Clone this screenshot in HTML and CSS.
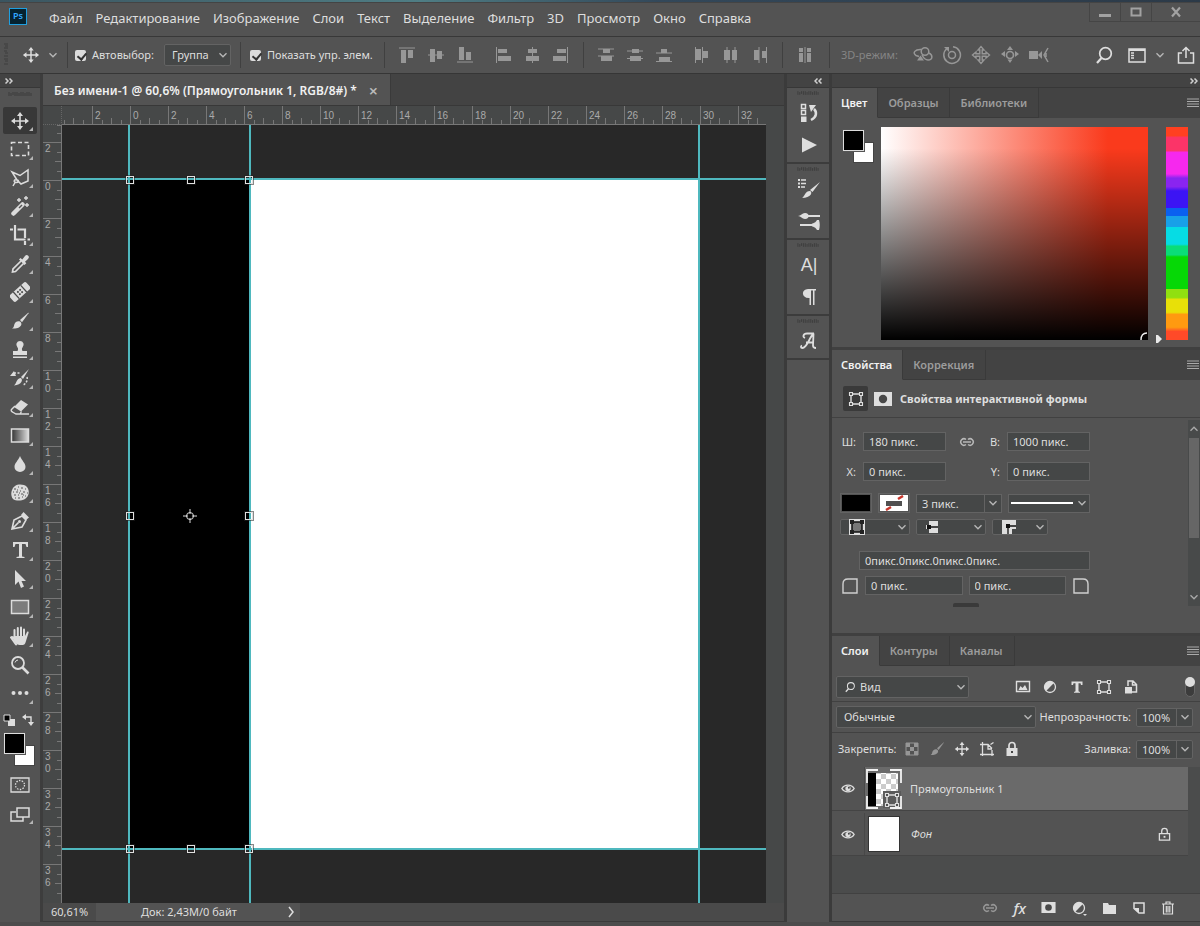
FILE: index.html
```html
<!DOCTYPE html>
<html lang="ru">
<head>
<meta charset="utf-8">
<title>Без имени-1</title>
<link rel="stylesheet" href="styles.css">
</head>
<body>
<svg class="defs" aria-hidden="true">
  <symbol id="chev" viewBox="0 0 10 10"><path d="M1.5 3.2 5 6.8 8.5 3.2" fill="none" stroke="currentColor" stroke-width="1.3"/></symbol>
  <symbol id="move" viewBox="0 0 20 20"><path d="M10 3v14M3 10h14" stroke="currentColor" stroke-width="1.6"/><path d="M10 1 13 5H7zM10 19 7 15h6zM1 10 5 7v6zM19 10l-4 3V7z" fill="currentColor"/></symbol>
  <symbol id="menu" viewBox="0 0 12 10"><path d="M0 1h12M0 3.5h12M0 6h12M0 8.5h12" stroke="currentColor" stroke-width="1.2"/></symbol>
  <symbol id="frame" viewBox="0 0 16 16"><path d="M3 3h10v10H3z" fill="none" stroke="currentColor" stroke-width="1.4"/><path d="M1.5 1.5h3v3h-3zM11.500 1.500h3v3h-3zM1.500 11.500h3v3h-3zM11.500 11.500h3v3h-3z" fill="#484848" stroke="currentColor" stroke-width="1.1"/></symbol>
  <symbol id="eye" viewBox="0 0 16 12"><path d="M1 6C4 .8 12 .8 15 6 12 11.200 4 11.200 1 6z" fill="none" stroke="currentColor" stroke-width="1.6"/><circle cx="8" cy="6" r="3" fill="currentColor"/><circle cx="9" cy="5.200" r="1.100" fill="#444"/></symbol>
  <symbol id="link" viewBox="0 0 18 10"><path d="M8 2.500A3.200 3.200 0 1 0 8 7.500M10 2.500a3.200 3.200 0 1 1 0 5M5 5h8" fill="none" stroke="currentColor" stroke-width="1.500"/></symbol>
  <symbol id="half" viewBox="0 0 16 16"><circle cx="8" cy="8" r="5.500" fill="none" stroke="currentColor" stroke-width="1.300"/><path d="M4.100 11.900A5.500 5.500 0 0 1 11.900 4.100z" fill="currentColor"/></symbol>
  <symbol id="mask" viewBox="0 0 18 14"><path d="M0 0h18v14H0z" fill="currentColor"/><circle cx="9" cy="7" r="4.200" fill="#484848"/></symbol>
  <symbol id="lens" viewBox="0 0 20 20"><circle cx="11.500" cy="8.500" r="5.800" fill="none" stroke="currentColor" stroke-width="1.700"/><path d="M7.500 13 3 18" stroke="currentColor" stroke-width="2.200"/></symbol>
  <symbol id="brush" viewBox="0 0 20 20"><path d="M18.500 1.500 10 9l2 2.200 6.500-9z" fill="currentColor"/><path d="M9 10.200c1.600.3 2.500 1.400 2.400 3C11 16 7 18 2 17.500c2-1 1.800-2.600 2.400-4.300.7-2 2.500-3.300 4.600-3z" fill="currentColor"/></symbol>
  <symbol id="grip" viewBox="0 0 24 4"><path d="M1 0v4M3 1v3M5 0v3M7 0v4M9 0v4M11 1v3M13 0v4M15 0v4M17 1v3M19 0v4M21 0v4M23 1v3" stroke="#3c3c3c" stroke-width="1"/></symbol>
  <symbol id="dbl" viewBox="0 0 8 6"><path d="M.5.500 3 3 .500 5.500M4.500.500 7 3 4.500 5.500" fill="none" stroke="currentColor" stroke-width="1.500"/></symbol>
  <symbol id="lock" viewBox="0 0 14 16"><path d="M1.500 7h11v7h-11zM4 7V4.500a3 3 0 0 1 6 0V7" fill="none" stroke="currentColor" stroke-width="1.400"/><path d="M6 9.500h2v2H6z" fill="currentColor"/></symbol>
</svg>

<div class="app">
  <div class="skyline"></div>

  <header class="menubar">
    <div class="logo">Ps</div>
    <nav class="menus">
      <button>Файл</button><button>Редактирование</button><button>Изображение</button><button>Слои</button><button>Текст</button><button>Выделение</button><button>Фильтр</button><button>3D</button><button>Просмотр</button><button>Окно</button><button>Справка</button>
    </nav>
    <div class="winbtns">
      <button aria-label="Свернуть"><svg width="14" height="12"><path d="M1 8h12v3H1z" fill="currentColor"/></svg></button>
      <button aria-label="Развернуть"><svg width="14" height="12"><path d="M2.500 2.500h9v7h-9z" fill="none" stroke="currentColor" stroke-width="2"/></svg></button>
      <button aria-label="Закрыть" class="wide"><svg width="12" height="12"><path d="M2 1.500 10 10.500M10 1.500 2 10.500" stroke="currentColor" stroke-width="2.200"/></svg></button>
    </div>
  </header>

  <div class="options">
    <div class="osec first">
      <svg class="vgrip" width="4" height="24"><path d="M0 1h4M1 3h3M0 5h4M0 8h3M1 10h3M0 13h4M0 16h4M1 18h3M0 21h4" stroke="#3e3e3e"/></svg>
      <svg width="18" height="18"><use href="#move"/></svg>
      <svg width="10" height="10"><use href="#chev"/></svg>
    </div>
    <div class="osec auto">
      <label class="check"><input type="checkbox" checked>Автовыбор:</label>
      <span class="pick small"><select aria-label="Автовыбор"><option>Группа</option></select><svg width="10" height="10"><use href="#chev"/></svg></span>
    </div>
    <div class="osec show"><label class="check"><input type="checkbox" checked>Показать упр. элем.</label></div>
    <div class="osec icons dim">
      <div class="trio">
        <svg viewBox="0 0 20 20"><path d="M2 3h16" stroke="currentColor"/><path d="M4 5h5v13H4zM11 5h5v8h-5z" fill="currentColor"/></svg>
        <svg viewBox="0 0 20 20"><path d="M2 10h16" stroke="currentColor"/><path d="M4 4h5v13H4zM11 6h5v8h-5z" fill="currentColor"/></svg>
        <svg viewBox="0 0 20 20"><path d="M2 17h16" stroke="currentColor"/><path d="M4 2h5v13H4zM11 7h5v8h-5z" fill="currentColor"/></svg>
      </div>
      <div class="trio">
        <svg viewBox="0 0 20 20"><path d="M3.500 2v16" stroke="currentColor"/><path d="M5 4h9v4H5zM5 11h13v5H5z" fill="currentColor"/></svg>
        <svg viewBox="0 0 20 20"><path d="M10.500 2v16" stroke="currentColor"/><path d="M6 4h9v4H6zM4 11h13v5H4z" fill="currentColor"/></svg>
        <svg viewBox="0 0 20 20"><path d="M16.500 2v16" stroke="currentColor"/><path d="M6 4h9v4H6zM2 11h13v5H2z" fill="currentColor"/></svg>
      </div>
    </div>
    <div class="osec icons dim">
      <div class="trio">
        <svg viewBox="0 0 20 20"><path d="M2 4h16M2 11h16" stroke="currentColor"/><path d="M7 4h7v4H7zM5 11h11v5H5z" fill="currentColor"/></svg>
        <svg viewBox="0 0 20 20"><path d="M2 6h16M2 13.500h16" stroke="currentColor"/><path d="M7 4h7v4H7zM5 11h11v5H5z" fill="currentColor"/></svg>
        <svg viewBox="0 0 20 20"><path d="M2 8h16M2 16.500h16" stroke="currentColor"/><path d="M7 4h6v4H7zM5 12h11v5H5z" fill="currentColor"/></svg>
      </div>
      <div class="trio">
        <svg viewBox="0 0 20 20"><path d="M3.500 2v16M10.500 2v16" stroke="currentColor"/><path d="M4 4h5v11H4zM11 6h5v7h-5z" fill="currentColor"/></svg>
        <svg viewBox="0 0 20 20"><path d="M6 2v16M14 2v16" stroke="currentColor"/><path d="M3 5h6v10H3zM11 5h5v10h-5z" fill="currentColor"/></svg>
        <svg viewBox="0 0 20 20"><path d="M9 2v16M16.500 2v16" stroke="currentColor"/><path d="M4 5h5v10H4zM12 6h4v7h-4z" fill="currentColor"/></svg>
      </div>
    </div>
    <div class="osec icons dim single">
      <svg viewBox="0 0 20 20"><path d="M10 2v16" stroke="currentColor"/><path d="M4 3h4v4H4zM4 8h4v9H4zM12 3h4v4h-4zM12 8h4v9h-4z" fill="currentColor"/></svg>
    </div>
    <div class="osec mode">
      <span class="off">3D-режим:</span>
      <div class="trio">
        <svg viewBox="0 0 20 20"><g fill="none" stroke="currentColor" stroke-width="1.500"><circle cx="12" cy="6.500" r="3.800"/><path d="M8.500 4.500C2 4-1 8 3 10.500l3 1M16 8c4 2 4 7-1 7-3 0-4.500-2-6-5"/></g><path d="m4 15.500 3.500-5 3.500 5z" fill="currentColor"/></svg>
        <svg viewBox="0 0 20 20"><g fill="none" stroke="currentColor" stroke-width="1.500"><circle cx="10" cy="10" r="3.500"/><path d="M5 3.500A8.300 8.300 0 1 0 11 1.800"/></g><path d="M2 2h5v5z" fill="currentColor"/></svg>
        <svg viewBox="0 0 20 20"><path d="M8.800 8.800V5H7L10 1.500 13 5h-1.800v3.800H15V7l3.500 3-3.500 3v-1.800h-3.800V15H13l-3 3.500L7 15h1.800v-3.800H5V13l-3.500-3L5 7v1.800z" fill="none" stroke="currentColor" stroke-width="1.400"/></svg>
        <svg viewBox="0 0 20 20"><circle cx="10" cy="10" r="3.500" fill="none" stroke="currentColor" stroke-width="1.700"/><path d="m10 1 3 4H7zM10 18l-2.500-3.500h5zM1 9l4-3v6zM19 9l-4 3V6z" fill="currentColor"/></svg>
        <svg viewBox="0 0 20 20"><path d="M0 6h9v8H0zM9 10l4-4v8z" fill="currentColor"/><path d="m19 3-4 7 4 7M17 8v4" fill="none" stroke="currentColor" stroke-width="1.500"/></svg>
      </div>
    </div>
    <div class="oright">
      <svg width="20" height="20"><use href="#lens"/></svg>
      <svg width="18" height="15" viewBox="0 0 18 15"><path d="M1 1h16v13H1z" fill="none" stroke="currentColor" stroke-width="1.500"/><path d="M1 2h16" stroke="currentColor" stroke-width="2"/><path d="M3 5h3M3 7.500h3M3 10h3" stroke="currentColor" stroke-width="1.500"/></svg>
      <svg width="10" height="10"><use href="#chev"/></svg>
      <svg width="18" height="18" viewBox="0 0 18 18"><path d="M5 7H1.500v10h15V7H13M9 12V2M5.500 5 9 1.500 12.500 5" fill="none" stroke="currentColor" stroke-width="1.500"/></svg>
    </div>
  </div>

  <main class="work">
    <aside class="toolbar">
      <div class="strip left"><svg width="8" height="6"><use href="#dbl"/></svg></div>
      <svg class="grip" width="24" height="4"><use href="#grip"/></svg>
      <div class="tools">
        <button class="on" aria-label="Перемещение"><svg viewBox="0 0 20 20"><use href="#move"/></svg></button>
        <button aria-label="Область"><svg viewBox="0 0 20 20"><path d="M1.500 3.500h17v13h-17z" fill="none" stroke="currentColor" stroke-width="1.600" stroke-dasharray="4 2.500"/></svg></button>
        <button aria-label="Лассо"><svg viewBox="0 0 20 20"><path d="m7 12-5-8 8 3.500L18 2v11l-7 3-4-4c-3-1-4 2-1 2.500 3 0 3-2.500 1-2.500M5 14.500 3 18" fill="none" stroke="currentColor" stroke-width="1.500"/></svg></button>
        <button aria-label="Волшебная палочка"><svg viewBox="0 0 20 20"><path d="m3.500 17.500 9-9" stroke="currentColor" stroke-width="4.500" stroke-linecap="round"/><path d="m9 12 3-3" stroke="#555" stroke-width="1.500"/><path d="M9 2v4M7 4h4M16 0v4M14 2h4M17 7v4M15 9h4" stroke="currentColor" stroke-width="1.400"/></svg></button>
        <button aria-label="Рамка"><svg viewBox="0 0 20 20"><path d="M5 0v14.500h10.500M0 4.500h3M7.500 4.500H15V13M15 16v4M17.500 14.500H20" fill="none" stroke="currentColor" stroke-width="2.200"/></svg></button>
        <button aria-label="Пипетка"><svg viewBox="0 0 20 20"><path d="m11 7-8 8-.5 3 3-.500 8-8" fill="none" stroke="currentColor" stroke-width="1.700"/><path d="M9 5.500 10.500 4l1.800 1.500L15 2c2-2.500 5.500.800 3 3l-3 2.700 1.300 1.600L14.500 11z" fill="currentColor"/></svg></button>
        <button aria-label="Лечащая кисть"><svg viewBox="0 0 20 20"><g transform="rotate(-42 10 10)"><rect x="-1" y="5.500" width="22" height="9" rx="2" fill="currentColor"/><path d="M5 5.500v9M15 5.500v9" stroke="#4c4c4c" stroke-width="1.300"/><circle cx="8.500" cy="8.500" r="1" fill="#444"/><circle cx="11.500" cy="8.500" r="1" fill="#444"/><circle cx="8.500" cy="11.500" r="1" fill="#444"/><circle cx="11.500" cy="11.500" r="1" fill="#444"/></g></svg></button>
        <button aria-label="Кисть"><svg viewBox="0 0 20 20"><use href="#brush"/></svg></button>
        <button aria-label="Штамп"><svg viewBox="0 0 20 20"><path d="M10 1a3.700 3.700 0 0 1 2.500 6.400c-1 1-.5 2.600 0 3.600H17v4H3v-4h4.500c.5-1 1-2.600 0-3.600A3.700 3.700 0 0 1 10 1zM3 16.500h14V18H3z" fill="currentColor"/></svg></button>
        <button aria-label="Архивная кисть"><svg viewBox="0 0 20 20"><path d="M19 1 11 9l2 2zM10.500 10c3 1 1.500 7-6.500 7.500C7 15 6 11 10.500 10zM0 8l4-5 2 5z" fill="currentColor"/><path d="M4 5h7M17 9c1 3-1 7-4 8" fill="none" stroke="currentColor" stroke-width="1.500" stroke-dasharray="2 1.500"/></svg></button>
        <button aria-label="Ластик"><svg viewBox="0 0 20 20"><path d="m11 3 7 4.500-7 7-7-4.500z" fill="currentColor"/><path d="m5 9-3.500 3.500c-.8 1 0 2 1 2.500L6 17h4l1.500-2.500M8 17h11" fill="none" stroke="currentColor" stroke-width="1.400"/></svg></button>
        <button aria-label="Градиент"><svg viewBox="0 0 20 20"><defs><linearGradient id="g"><stop stop-color="#333"/><stop offset="1" stop-color="#ddd"/></linearGradient></defs><path d="M1.500 3h17v13h-17z" fill="url(#g)" stroke="currentColor" stroke-width="1.500"/></svg></button>
        <button aria-label="Размытие"><svg viewBox="0 0 20 20"><path d="M10 2c2 5 5.500 7 5.500 11a5.500 5 0 0 1-11 0C4.500 9 8 7 10 2z" fill="currentColor"/></svg></button>
        <button aria-label="Губка"><svg viewBox="0 0 20 20"><path d="M5 3c3-2 9-2 12 1 3 4 2 9-2 12-4 2-9 2-12 0-3-4-2-10 2-13z" fill="currentColor"/><path d="M4 6h2M8 4h1M11 5h2M15 6h1M3 9h1M6 9h2M10 8h1M13 9h2M17 10h1M4 12h2M8 12h1M11 11h2M15 13h1M5 15h1M8 15h2M12 14h1M9 10h1M13 12h1M7 7h1" stroke="#555" stroke-width="1.200"/></svg></button>
        <button aria-label="Перо"><svg viewBox="0 0 20 20"><path d="m2 18 2-9 8-4 4 4-4 7zM2 18l6.500-6.500" fill="none" stroke="currentColor" stroke-width="1.600"/><circle cx="9.500" cy="10.500" r="1.500" fill="currentColor"/><path d="m11 4 2.500-3L19 6.500 16 9z" fill="currentColor"/></svg></button>
        <button aria-label="Текст"><svg viewBox="0 0 20 20"><path d="M3 2h15v5h-1.500L15.500 4H12v12.500l2.500.500v1h-8v-1l2.500-.500V4H5.500l-1 3H3z" fill="currentColor"/></svg></button>
        <button aria-label="Выделение контура"><svg viewBox="0 0 20 20"><path d="M5 1v15l3.500-3.500L11 19l3-1.500L11.500 12H16z" fill="currentColor"/></svg></button>
        <button aria-label="Прямоугольник"><svg viewBox="0 0 20 20"><path d="M1.500 3.500h17v13h-17z" fill="#7c7c7c" stroke="currentColor" stroke-width="1.500"/></svg></button>
        <button aria-label="Рука"><svg viewBox="0 0 20 20"><path d="M6 18.500 1 11.500c1-1 2-.5 3.500 1.500V4M7.800 11V2M11 11V1.500M14 11V3.500" fill="none" stroke="currentColor" stroke-width="2" stroke-linecap="round"/><path d="M4 10h11l2-4c1-1 2 0 1.500 1L16 15c-1 4-2 4-5 4-3.500 0-6-1-7-5z" fill="currentColor"/></svg></button>
        <button aria-label="Масштаб" class="plain"><svg viewBox="0 0 20 20"><circle cx="8" cy="8" r="6" fill="none" stroke="currentColor" stroke-width="1.800"/><path d="M5 7.500A3.500 3.500 0 0 1 8 5" fill="none" stroke="currentColor"/><path d="m12.500 12.500 6 6" stroke="currentColor" stroke-width="2.600"/></svg></button>
        <button aria-label="Ещё"><svg viewBox="0 0 20 20"><circle cx="3.500" cy="10" r="2" fill="currentColor"/><circle cx="10" cy="10" r="2" fill="currentColor"/><circle cx="16.500" cy="10" r="2" fill="currentColor"/></svg></button>
      </div>
      <div class="colormini">
        <svg width="12" height="12"><path d="M5 5h7v7H5z" fill="#ddd"/><path d="M1 1h6v6H1z" fill="#000" stroke="#ddd"/></svg>
        <svg width="12" height="12"><path d="M3 3h6v6" fill="none" stroke="currentColor" stroke-width="1.400"/><path d="m0 3 4-3v6zM9 12 6 8h6z" fill="currentColor"/></svg>
      </div>
      <div class="swatches"><button class="bg" aria-label="Фон"></button><button class="fg" aria-label="Основной цвет"></button></div>
      <div class="tools two">
        <button class="plain" aria-label="Быстрая маска"><svg viewBox="0 0 20 20"><path d="M1 3h18v14H1z" fill="none" stroke="currentColor" stroke-width="1.300"/><circle cx="10" cy="10" r="4.500" fill="none" stroke="currentColor" stroke-width="1.300" stroke-dasharray="1.500 1.300"/></svg></button>
        <button aria-label="Режим экрана"><svg viewBox="0 0 20 20"><path d="M6 8H1v9h12v-4M7 4h12v9H7z" fill="none" stroke="currentColor" stroke-width="1.500"/></svg></button>
      </div>
    </aside>

    <section class="doc">
      <div class="doctabs"><div class="doctab">Без имени-1 @ 60,6% (Прямоугольник 1, RGB/8#) *<button aria-label="Закрыть документ">×</button></div></div>
      <div class="stage">
        <div class="corner"></div>
        <div class="hruler"><i></i><b>2</b><b>0</b><b>2</b><b>4</b><b>6</b><b>8</b><b>10</b><b>12</b><b>14</b><b>16</b><b>18</b><b>20</b><b>22</b><b>24</b><b>26</b><b>28</b><b>30</b><b>32</b></div>
        <div class="track"></div>
        <div class="vruler"><i></i><b>2</b><b>0</b><b>2</b><b>4</b><b>6</b><b>8</b><b>1<br>0</b><b>1<br>2</b><b>1<br>4</b><b>1<br>6</b><b>1<br>8</b><b>2<br>0</b><b>2<br>2</b><b>2<br>4</b><b>2<br>6</b><b>2<br>8</b><b>3<br>0</b><b>3<br>2</b><b>3<br>4</b><b>3<br>6</b></div>
        <div class="canvas">
          <div class="page"></div><div class="shape"></div>
          <div class="guide v g1"></div><div class="guide v g2"></div><div class="guide v g3"></div>
          <div class="guide h g4"></div><div class="guide h g5"></div>
          <i class="handle c1 r1"></i><i class="handle c2 r1"></i><i class="handle c3 r1"></i>
          <i class="handle c1 r2"></i><i class="handle c3 r2"></i>
          <i class="handle c1 r3"></i><i class="handle c2 r3"></i><i class="handle c3 r3"></i>
          <svg class="pivot" width="14" height="14"><circle cx="7" cy="7" r="3.500" fill="none" stroke="#ddd"/><path d="M7 0v5M7 9v5M0 7h5M9 7h5" stroke="#ddd"/></svg>
        </div>
        <div class="track"></div>
      </div>
      <div class="status"><span class="zoom">60,61%</span><span class="info">Док: 2,43M/0 байт</span><button aria-label="Подробнее"><svg width="6" height="12"><path d="m1 1 4 5-4 5" fill="none" stroke="currentColor" stroke-width="1.500"/></svg></button></div>
    </section>

    <aside class="dock">
      <div class="strip right"><svg class="flip" width="8" height="6"><use href="#dbl"/></svg></div>
      <div class="dgroup"><svg class="grip" width="22" height="4"><use href="#grip"/></svg>
        <button aria-label="История"><svg viewBox="0 0 20 20"><path d="M2.500 1.500h4v4h-4zM2.500 7.500h4v4h-4z" fill="none" stroke="currentColor" stroke-width="1.500"/><path d="M2 13.500h5.500V19H2z" fill="currentColor"/><path d="M12 17c6-3 6-8 3-11" fill="none" stroke="currentColor" stroke-width="2.500"/><path d="M10 2h7l-5 7z" fill="currentColor"/></svg></button>
        <button aria-label="Операции"><svg viewBox="0 0 20 20"><path d="M3 2.500 18 10 3 17.500z" fill="currentColor"/></svg></button></div>
      <div class="dgroup"><svg class="grip" width="22" height="4"><use href="#grip"/></svg>
        <button aria-label="Кисти"><svg width="24" height="20" viewBox="0 0 24 20"><path d="M1 1h2M1 4.500h2M1 8h2" stroke="currentColor" stroke-width="2"/><path d="M4 1h5M4 4.500h5M4 8h4" stroke="currentColor" stroke-width="1.300"/><path d="M23 3 13 11l2.500 2zM13 12c3 1 1 7-8 7 3-2 3-7 8-7z" fill="currentColor"/></svg></button>
        <button aria-label="Настройки кисти"><svg width="24" height="20" viewBox="0 0 24 20"><path d="M11 5h12M3 14h12" stroke="currentColor" stroke-width="2"/><path d="M1 5c3 0 4-3 7-3 5 0 5 6 0 6-3 0-4-3-7-3zM14 14c0-2 4-1 6-5h2c1 3 1 7 0 10h-2c-2-4-6-3-6-5z" fill="currentColor"/></svg></button></div>
      <div class="dgroup"><svg class="grip" width="22" height="4"><use href="#grip"/></svg>
        <button aria-label="Символ" class="glyph">A|</button>
        <button aria-label="Абзац"><svg viewBox="0 0 20 20"><path d="M9 2h8v1.500h-1.500V18H14V3.500h-2V18h-1.500v-7C2 11.500 2 2 9 2z" fill="currentColor"/></svg></button></div>
      <div class="dgroup"><svg class="grip" width="22" height="4"><use href="#grip"/></svg>
        <button aria-label="Глифы"><svg viewBox="0 0 20 20"><path d="M14.500 2.500C10 7 8 17 3.500 17c-2 0-2-2-.5-2.500M14.500 2.500l-.5 12q0 2.500 3 2.500M7 11.500h7.500M8 2.500h7M8 2.500C4 2.500 3.500 6 6 7" fill="none" stroke="currentColor" stroke-width="1.800"/></svg></button></div>
    </aside>

    <aside class="panels">
      <div class="strip right"><svg width="8" height="6"><use href="#dbl"/></svg></div>
      <section class="panel">
        <div class="tabs"><button class="cur">Цвет</button><button>Образцы</button><button>Библиотеки</button><svg class="pm" width="12" height="10"><use href="#menu"/></svg></div>
        <div class="color">
          <div class="swatches"><button class="bg" aria-label="Фон"></button><button class="fg" aria-label="Основной цвет"></button></div>
          <div class="field"><svg width="8" height="8"><path d="M1 8C1 4 3 1 7 1" fill="none" stroke="#eee" stroke-width="1.400"/></svg></div>
          <div class="hue"><svg width="8" height="10"><path d="M1 1h2l4 4-4 4H1z" fill="#e8e8e8"/></svg></div>
        </div>
      </section>

      <section class="panel">
        <div class="tabs"><button class="cur">Свойства</button><button>Коррекция</button><svg class="pm" width="12" height="10"><use href="#menu"/></svg></div>
        <div class="phead"><span class="well"><svg width="16" height="16"><use href="#frame"/></svg></span><svg width="18" height="14"><use href="#mask"/></svg><h2>Свойства интерактивной формы</h2></div>
        <div class="props">
          <div class="form">
            <div class="row r-size"><label for="w">Ш:</label><input id="w" value="180 пикс."><svg width="18" height="10"><use href="#link"/></svg><label for="h">В:</label><input id="h" value="1000 пикс."></div>
            <div class="row r-size"><label for="x">X:</label><input id="x" value="0 пикс."><span></span><label for="y">Y:</label><input id="y" value="0 пикс."></div>
            <div class="row r-stroke">
              <button class="chip" aria-label="Заливка"><svg width="28" height="16"><path d="M0 0h28v16H0z" fill="#000"/></svg></button>
              <button class="chip" aria-label="Обводка"><svg width="28" height="16"><path d="M0 0h28v16H0z" fill="#fff"/><path d="m6 15 5-3M18 4l5-3" stroke="#c8362c" stroke-width="2.500"/><path d="M6 6h16v5H6z" fill="#505050"/></svg></button>
              <span class="combo wide"><input aria-label="Толщина" value="3 пикс."><button aria-label="Список"><svg width="10" height="10"><use href="#chev"/></svg></button></span>
              <button class="line" aria-label="Тип линии"><i></i><svg width="10" height="10"><use href="#chev"/></svg></button>
            </div>
            <div class="row r-align">
              <button aria-label="Выравнивание"><svg width="16" height="16" viewBox="0 0 16 16"><path d="M0 0h16v16H0z" fill="#ddd"/><path d="M3 3h10v10H3z" fill="#777" stroke="#111" stroke-width="1.500"/><path d="M1 1h4v4H1zM11 1h4v4h-4zM1 11h4v4H1zM11 11h4v4h-4z" fill="#222"/></svg><svg width="10" height="10"><use href="#chev"/></svg></button>
              <button aria-label="Концы"><svg width="16" height="14" viewBox="0 0 16 14"><path d="M4 1h9v12H4V9H1V5h3z" fill="#ddd"/><path d="M2 5h4v4H2z" fill="#111"/><path d="M5 7h8" stroke="#111" stroke-width="1.500"/></svg><svg width="10" height="10"><use href="#chev"/></svg></button>
              <button aria-label="Углы"><svg width="16" height="14" viewBox="0 0 16 14"><path d="M1 0h14v9h-4v5H1z" fill="#ddd"/><path d="M7 14V6h8" fill="none" stroke="#111" stroke-width="1.300"/><path d="M5 4h4v4H5z" fill="#111"/></svg><svg width="10" height="10"><use href="#chev"/></svg></button>
            </div>
            <input class="radii" aria-label="Радиусы" value="0пикс.0пикс.0пикс.0пикс.">
            <div class="row r-corner"><svg width="18" height="16" viewBox="0 0 18 16"><path d="M2 15V6q0-5 5-5h9v14z" fill="none" stroke="currentColor" stroke-width="1.400"/></svg><input aria-label="Левый радиус" value="0 пикс."><input aria-label="Правый радиус" value="0 пикс."><svg width="18" height="16" viewBox="0 0 18 16"><path d="M2 15V1h9q5 0 5 5v9z" fill="none" stroke="currentColor" stroke-width="1.400"/></svg></div>
            <div class="nub"></div>
          </div>
          <div class="scroll"><svg class="flip" width="10" height="10"><use href="#chev"/></svg><div></div><svg width="10" height="10"><use href="#chev"/></svg></div>
        </div>
      </section>

      <section class="panel grow">
        <div class="tabs"><button class="cur">Слои</button><button>Контуры</button><button>Каналы</button><svg class="pm" width="12" height="10"><use href="#menu"/></svg></div>
        <div class="lrow filter">
          <span class="pick kind"><svg class="lead" width="12" height="12"><use href="#lens"/></svg><select aria-label="Фильтр слоёв"><option>Вид</option></select><svg width="10" height="10"><use href="#chev"/></svg></span>
          <div class="ficons">
            <svg viewBox="0 0 16 16"><path d="M1.500 2.500h13v10h-13z" fill="none" stroke="currentColor" stroke-width="1.400"/><path d="m3.500 11 2-4 2 2 2.500-3 2.500 5z" fill="currentColor"/></svg>
            <svg viewBox="0 0 16 16"><use href="#half"/></svg>
            <svg viewBox="0 0 16 16"><path d="M2.500 2.500h11V6H12l-.500-1.700H9.500v8L11 13v.700H5V13l1.500-.700v-8H4.500L4 6H2.500z" fill="currentColor"/></svg>
            <svg viewBox="0 0 16 16"><use href="#frame"/></svg>
            <svg viewBox="0 0 16 16"><path d="M5 7V2h5l3.500 3.500V13H9M9.500 2v4h4" fill="none" stroke="currentColor" stroke-width="1.500"/><path d="M2 8h7v6.500H2z" fill="currentColor"/></svg>
          </div>
          <button class="toggle" aria-label="Фильтр"><i></i></button>
        </div>
        <div class="lrow">
          <span class="pick blend"><select aria-label="Режим наложения"><option>Обычные</option></select><svg width="10" height="10"><use href="#chev"/></svg></span>
          <label class="pct">Непрозрачность:<span class="combo"><input value="100%"><button aria-label="Непрозрачность, список"><svg width="10" height="10"><use href="#chev"/></svg></button></span></label>
        </div>
        <div class="lrow last">
          <span class="lk">Закрепить:</span>
          <div class="licons">
            <svg class="half" viewBox="0 0 16 16"><path d="M2 2h12v12H2z" fill="none" stroke="currentColor"/><path d="M2 2h4v4H2zM10 2h4v4h-4zM6 6h4v4H6zM2 10h4v4H2zM10 10h4v4h-4z" fill="currentColor"/></svg>
            <svg class="half" viewBox="0 0 20 20"><use href="#brush"/></svg>
            <svg viewBox="0 0 20 20"><use href="#move"/></svg>
            <svg viewBox="0 0 16 16"><path d="M3.500 1v14M13 9v6M1 3.500h8l4 4M1 13.500h14M9 4v4h4M11.500 3.500l3-2" fill="none" stroke="currentColor" stroke-width="1.300"/></svg>
            <svg viewBox="0 0 16 16"><path d="M2.500 7h11v8h-11z" fill="currentColor"/><path d="M5 7V4.500a3 3 0 0 1 6 0V7" fill="none" stroke="currentColor" stroke-width="1.700"/><path d="M7 10h2v2H7z" fill="#444"/></svg>
          </div>
          <label class="pct">Заливка:<span class="combo"><input value="100%"><button aria-label="Заливка, список"><svg width="10" height="10"><use href="#chev"/></svg></button></span></label>
        </div>
        <div class="layers">
          <div class="layer sel"><button class="vis" aria-label="Видимость"><svg width="14" height="11"><use href="#eye"/></svg></button><div class="lbody">
            <svg width="36" height="40" viewBox="0 0 36 40"><defs><pattern id="ck" width="10" height="10" patternUnits="userSpaceOnUse"><path d="M0 0h10v10H0z" fill="#fff"/><path d="M0 0h5v5H0zM5 5h5v5H5z" fill="#cbcbcb"/></pattern></defs><path d="M3 4h29v33H3z" fill="url(#ck)"/><path d="M2 4h8v33H2z" fill="#000"/><path d="M17 22h18v17H17z" fill="#5a5a5a"/><svg x="18" y="23" width="16" height="16"><use href="#frame"/></svg><path d="M1 14V1h11M24 1h11v13M1 27v12h11M24 39h11V27" fill="none" stroke="#f2f2f2" stroke-width="1.800"/></svg>
            <span>Прямоугольник 1</span></div></div>
          <div class="layer back"><button class="vis" aria-label="Видимость"><svg width="14" height="11"><use href="#eye"/></svg></button><div class="lbody">
            <span class="thumb"></span><em>Фон</em><svg class="lkd" width="13" height="15"><use href="#lock"/></svg></div></div>
        </div>
        <div class="lfoot">
          <svg class="half" width="18" height="10"><use href="#link"/></svg>
          <span class="fx">fx</span>
          <svg width="15" height="11"><use href="#mask"/></svg>
          <svg width="16" height="16"><use href="#half"/><path d="M12 14h4l-2 2z" fill="currentColor"/></svg>
          <svg width="15" height="12" viewBox="0 0 15 12"><path d="M1 1h5l1 2h7v9H1z" fill="currentColor"/></svg>
          <svg width="14" height="14" viewBox="0 0 14 14"><path d="M2 2h10v10H7L2 7.500z" fill="none" stroke="currentColor" stroke-width="1.500"/><path d="M2 7h5v5z" fill="currentColor"/></svg>
          <svg width="14" height="14" viewBox="0 0 14 14"><path d="M1 3h12M5 3V1h4v2M2.500 3v10h9V3M5.300 5v6.500M7 5v6.500M8.800 5v6.500" fill="none" stroke="currentColor" stroke-width="1.200"/></svg>
        </div>
      </section>
    </aside>
  </main>
  <div class="base"></div>
</div>
</body>
</html>
```
FILE: styles.css
```css
* { box-sizing: border-box; }
body { margin: 0; background: #535353; color: #dedede; font: 11px/14px "Noto Sans", sans-serif; }
button, input, select { font: inherit; color: inherit; border: 0; padding: 0; margin: 0; background: none; border-radius: 0; }
svg { display: block; flex: none; }
.defs { position: absolute; width: 0; height: 0; }
.app { min-height: 100vh; display: flex; flex-direction: column; overflow: hidden; }
.skyline { height: 2px; background: linear-gradient(90deg, #3b5560, #4f7d84 35%, #33485a 55%, #2c3a48); }

/* Menu bar */
.menubar { height: 35px; display: flex; align-items: flex-start; border-bottom: 1px solid #383838; border-top: 1px solid #444; }
.logo { margin: 5px 15px 0 9px; width: 18px; height: 17px; border: 1px solid #1f9fe0; background: #06222f; color: #31a8ff; font-size: 9px; line-height: 14px; text-align: center; font-weight: 600; }
.menus { display: flex; font-size: 13px; line-height: 18px; }
.menus button { padding: 6px 6px 0 7px; }
.winbtns { display: flex; margin-left: auto; }
.winbtns button { width: 31px; height: 19px; display: flex; justify-content: center; align-items: center; border: 1px solid #454545; border-top: 0; border-right: 0; color: #a2a2a2; }
.winbtns .wide { width: 49px; }

/* Tool options */
.options { height: 37px; display: flex; align-items: center; border-bottom: 1px solid #363636; }
.osec { height: 26px; display: flex; align-items: center; border-left: 1px solid #404040; flex: none; }
.osec.first { width: 67px; border: 0; padding-left: 4px; }
.vgrip { margin-right: 14px; }
.first svg:last-child { margin-left: 8px; color: #b8b8b8; }
.auto { width: 173px; padding: 0 9px 0 7px; justify-content: space-between; }
.show { width: 144px; padding-left: 9px; }
.check { display: flex; align-items: center; gap: 6px; }
.check input { appearance: none; width: 11px; height: 11px; border-radius: 2px; background: #dcdcdc; position: relative; }
.check input::after { content: ""; position: absolute; left: 4px; top: 1px; width: 4px; height: 7px; border: solid #333; border-width: 0 2px 2px 0; transform: rotate(40deg); }
.pick { position: relative; display: flex; align-items: center; border: 1px solid #636363; border-radius: 2px; background: #454747; }
.pick select { appearance: none; width: 100%; height: 100%; padding-left: 7px; outline: 0; }
.pick > svg { position: absolute; right: 2px; pointer-events: none; color: #b8b8b8; }
.pick > .lead { left: 7px; right: auto; color: #dedede; }
.pick.small { width: 67px; height: 22px; }
.icons { width: 199px; padding-left: 12px; gap: 18px; }
.icons.single { width: 47px; }
.dim, .mode { color: #979797; }
.off { color: #858585; }
.trio { display: flex; gap: 9px; }
.trio svg, .single svg { width: 20px; height: 20px; }
.mode { padding-left: 11px; gap: 15px; }
.oright { margin-left: auto; display: flex; align-items: center; gap: 14px; padding-right: 5px; }
.oright svg:nth-child(3) { margin: 0 -2px 0 -5px; color: #b8b8b8; }

.work { flex: 1; display: flex; min-height: 0; }
.strip { height: 14px; display: flex; align-items: center; background: #434343; border-bottom: 1px solid #373737; padding: 0 5px; color: #d0d0d0; }
.strip.right { justify-content: flex-end; padding-right: 2px; }
.dock .strip.right { padding-right: 7px; }
.flip { transform: rotate(180deg); }

/* Toolbar */
.toolbar { width: 43px; flex: none; border-right: 3px solid #3d3d3d; }
.grip { margin: 4px auto 0; }
.tools { height: 600px; margin-top: 11px; display: flex; flex-direction: column; justify-content: space-between; padding: 0 3px; }
.tools button { position: relative; width: 34px; height: 27px; border-radius: 2px; display: flex; justify-content: center; align-items: center; color: #dcdcdc; }
.tools svg { width: 20px; height: 20px; }
.tools .on { background: #383838; }
.tools button::after { content: ""; position: absolute; right: 4px; bottom: 3px; border-left: 4px solid transparent; border-bottom: 4px solid #b5b5b5; }
.tools .plain::after { display: none; }
.tools.two { height: 56px; margin-top: 5px; }
.colormini { display: flex; justify-content: space-between; padding: 7px 6px 0 3px; }
.swatches { position: relative; width: 31px; height: 33px; margin: 7px 4px 0; }
.swatches button { position: absolute; width: 21px; height: 21px; border: 1px solid #444; }
.swatches .fg { left: 0; top: 0; background: #000; border: 1px solid #ddd; outline: 1px solid #555; }
.swatches .bg { right: 0; bottom: 0; background: #fff; }

/* Document window */
.doc { flex: 1; min-width: 0; display: flex; flex-direction: column; border-right: 3px solid #3b3b3b; }
.doctabs { height: 32px; background: #434343; border-bottom: 1px solid #383838; display: flex; }
.doctab { display: flex; align-items: center; gap: 12px; width: 348px; padding: 2px 10px 0 11px; background: #535353; border-right: 1px solid #3a3a3a; font-weight: 600; font-size: 12px; color: #f0f0f0; white-space: nowrap; }
.doctab button { font-size: 16px; color: #bbb; }
.stage { flex: 1; min-height: 0; display: grid; grid-template: 19px minmax(0, 1fr) / 19px minmax(0, 1fr) 18px; background: #464848; }
.corner { border-right: 1px dotted #666; border-bottom: 1px dotted #666; }
.hruler, .vruler { display: flex; overflow: hidden; color: #aaa; font: 10px/12px "Liberation Sans", sans-serif; border: 0 solid #777; }
.hruler { border-bottom-width: 1px; }
.vruler { flex-direction: column; border-right-width: 1px; }
.hruler b, .hruler i, .vruler b, .vruler i { flex: none; font-weight: 400; background-repeat: no-repeat; background-image: linear-gradient(#777, #777), linear-gradient(#777, #777), linear-gradient(#777, #777), linear-gradient(#777, #777); }
.hruler b, .hruler i { width: 38px; padding: 4px 0 0 3px; background-size: 1px 100%, 1px 4px, 1px 6px, 1px 4px; background-position: 0 0, 10px 100%, 19px 100%, 29px 100%; }
.hruler i { width: 30px; background-position: -9px 0, 2px 100%, 11px 100%, 21px 100%; }
.vruler b, .vruler i { height: 38px; padding: 1px 0 0 2px; background-size: 100% 1px, 4px 1px, 6px 1px, 4px 1px; background-position: 0 0, 100% 10px, 100% 19px, 100% 29px; }
.vruler i { height: 17px; background-size: 0 0, 0 0, 4px 1px, 4px 1px; background-position: 0 0, 0 0, 100% 0, 100% 8px; }
.canvas { position: relative; overflow: hidden; background: #282828; }
.page { position: absolute; left: 67px; top: 54px; width: 570px; height: 670px; background: #fff; }
.shape { position: absolute; left: 67px; top: 54px; width: 120px; height: 670px; background: #000; }
.guide { position: absolute; background: #4fb8be; }
.guide.v { width: 2px; top: 0; bottom: 0; }
.guide.h { height: 2px; left: 0; right: 0; }
.g1 { left: 66px; } .g2 { left: 187px; } .g3 { left: 636px; }
.g4 { top: 53px; } .g5 { top: 723px; }
.handle { position: absolute; width: 8px; height: 8px; border: 1px solid #e0e0e0; outline: 1px solid #2228; }
.c1 { left: 64px; } .c2 { left: 125px; } .c3 { left: 183px; }
.r1 { top: 51px; } .r2 { top: 387px; } .r3 { top: 720px; }
.pivot { position: absolute; left: 121px; top: 384px; }
.status { height: 19px; display: flex; align-items: center; background: #4a4a4a; border-bottom: 1px solid #3a3a3a; }
.zoom { width: 53px; padding-left: 8px; }
.info { width: 192px; padding-left: 45px; background: #535353; line-height: 18px; }
.status button { width: 12px; height: 18px; display: flex; align-items: center; background: #535353; }

/* Collapsed panels */
.dock { width: 45px; flex: none; border-right: 3px solid #3b3b3b; }
.dgroup { border-bottom: 2px solid #3c3c3c; padding-bottom: 1px; }
.dgroup .grip { margin: 3px auto 2px; }
.dgroup button { width: 100%; height: 32px; display: flex; justify-content: center; align-items: center; padding-left: 2px; color: #dedede; }
.dgroup button svg:not([width]) { width: 20px; height: 20px; }
.dgroup .glyph { font: 18px/20px "Liberation Sans", sans-serif; }

/* Panels */
.panels { flex: 0 0 368px; min-width: 0; display: flex; flex-direction: column; }
.panel { border-bottom: 3px solid #404040; }
.panel.grow { flex: 1; display: flex; flex-direction: column; border-bottom: 1px solid #3a3a3a; }
.tabs { display: flex; height: 30px; background: #434343; font-weight: 600; color: #9c9c9c; }
.tabs button { padding: 0 11px 0 10px; border-right: 1px solid #3a3a3a; border-bottom: 1px solid #3a3a3a; }
.tabs .cur { padding: 0 10px 0 9px; background: #535353; border-bottom-color: #535353; color: #f2f2f2; }
.pm { margin: 10px 1px 0 auto; color: #aaa; }
.color { display: flex; height: 229px; padding: 9px 12px 7px 6px; }
.color .swatches { margin: 3px 8px 0 5px; }
.field { flex: 1; margin: 0 18px 0 -1px; position: relative; background: linear-gradient(to top, #000, #0000 90%), linear-gradient(to right, #fff, #fa3a1c 85%); }
.field svg { position: absolute; right: 0; bottom: 0; }
.hue { width: 22px; position: relative; background: linear-gradient(#ff4020 0 4%, #fb3468 5% 11%, #f628ee 12% 22%, #8a24f0 24% 28%, #3c14f4 30% 38%, #0a60f0 38% 42%, #18a0e8 42% 47%, #06dce4 47% 55%, #0add78 56% 60%, #06d806 61% 76%, #90e010 76% 80%, #e8e008 81% 87%, #ff9a10 88% 94%, #ff4a28 96%); }
.hue svg { position: absolute; left: -11px; bottom: -4px; }

.phead { height: 38px; display: flex; align-items: center; gap: 6px; padding-left: 11px; border-bottom: 1px solid #414141; }
.phead h2 { font-size: 11px; font-weight: 700; margin: 0 0 0 2px; }
.well { width: 25px; height: 25px; display: grid; place-items: center; background: #3a3a3a; border-radius: 2px; }
.props { display: flex; height: 215px; }
.form { flex: 1; min-width: 0; padding: 14px 98px 0 9px; }
.row { display: flex; align-items: center; }
.row svg { color: #b8b8b8; }
.props input, .combo, .row button { height: 19px; border: 1px solid #636363; background: #454747; }
.props input { width: 100%; min-width: 0; padding-left: 5px; }
.r-size { display: grid; grid-template-columns: 15px 83px 28px 12px 83px; column-gap: 7px; margin-bottom: 11px; }
.r-size label { text-align: right; }
.r-size svg { margin: auto; }
.r-stroke { gap: 6px; margin: 12px 0 0 -1px; justify-content: space-between; }
.row .chip { width: 32px; height: 20px; display: grid; place-items: center; background: #535353; }
.combo { display: flex; }
.props .combo input, .combo input { border: 0; height: 100%; background: none; }
.row .combo button, .combo button { flex: 0 0 17px; height: 100%; border: 0; border-left: 1px solid #636363; display: grid; place-items: center; background: none; color: #b8b8b8; }
.combo.wide { width: 86px; }
.row .line { width: 82px; display: flex; align-items: center; justify-content: space-between; padding: 0 2px; }
.line i { width: 62px; height: 2px; background: #fff; }
.r-align { gap: 6px; margin: 6px 0 16px -1px; }
.row.r-align button { width: 70px; height: 16px; border-radius: 2px; display: flex; align-items: center; justify-content: space-between; padding: 0 2px 0 8px; }
.row.r-align button:last-child { width: 56px; }
.form .radii { display: block; width: calc(100% - 18px); margin: 0 0 6px 18px; }
.r-corner { gap: 6px; }
.r-corner svg { color: #d0d0d0; }
.nub { width: 26px; height: 4px; background: #3a3a3a; border-radius: 2px 2px 0 0; margin: 8px auto 0; }
.scroll { flex: none; width: 12px; height: 186px; margin-top: 2px; background: #484a4a; display: flex; flex-direction: column; align-items: center; padding: 4px 0; color: #aaa; }
.scroll div { width: 10px; height: 100px; background: #666; margin: 4px 0 auto; }

/* Layers */
.lrow { display: flex; align-items: center; height: 31px; border-bottom: 1px solid #414141; padding: 0 7px 0 4px; }
.lrow.filter { height: 36px; padding: 6px 5px 0 4px; }
.lrow.last { height: 34px; border: 0; padding: 0 7px 2px 6px; }
.kind { width: 133px; height: 22px; }
.kind select { padding-left: 23px; }
.ficons, .licons { display: flex; align-items: center; gap: 11px; margin-left: 46px; }
.ficons svg { width: 16px; height: 16px; }
.licons { gap: 9px; margin-left: 7px; }
.licons svg { width: 16px; height: 16px; }
svg.half { color: #969696; }
.toggle { width: 10px; height: 20px; border-radius: 5px; background: #3c3c3c; margin-left: auto; border: 1px solid #666; display: flex; }
.toggle i { width: 10px; height: 10px; border-radius: 5px; background: #ddd; margin: -1px; flex: none; }
.blend { width: 200px; height: 22px; }
.pct { margin-left: auto; display: flex; align-items: center; gap: 5px; }
.pct .combo { width: 57px; border-radius: 2px; }
.pct input { width: 39px; padding-left: 5px; }
.layers { flex: 1; background: #4b4c4c; }
.layer { display: flex; height: 44px; background: #535353; border-bottom: 1px solid #444; margin-right: 12px; }
.layer.back { height: 45px; padding-top: 2px; }
.vis { width: 33px; display: grid; place-items: center; border-right: 1px solid #484848; }
.lbody { flex: 1; display: flex; align-items: center; gap: 8px; padding-left: 1px; }
.sel .lbody { background: #6a6a6a; }
.thumb { width: 32px; height: 36px; border: 1px solid #333; background: #fff; margin: 0 1px 0 2px; }
.lbody em { margin-left: 2px; }
.lkd { margin: 0 17px 0 auto; }
.lfoot { height: 28px; display: flex; align-items: center; justify-content: flex-end; gap: 15px; padding-right: 25px; border-top: 1px solid #414141; }
.fx { font: italic 500 15px/16px "Noto Sans", sans-serif; }
.base { height: 4px; background: #4c4c4c; }
```
